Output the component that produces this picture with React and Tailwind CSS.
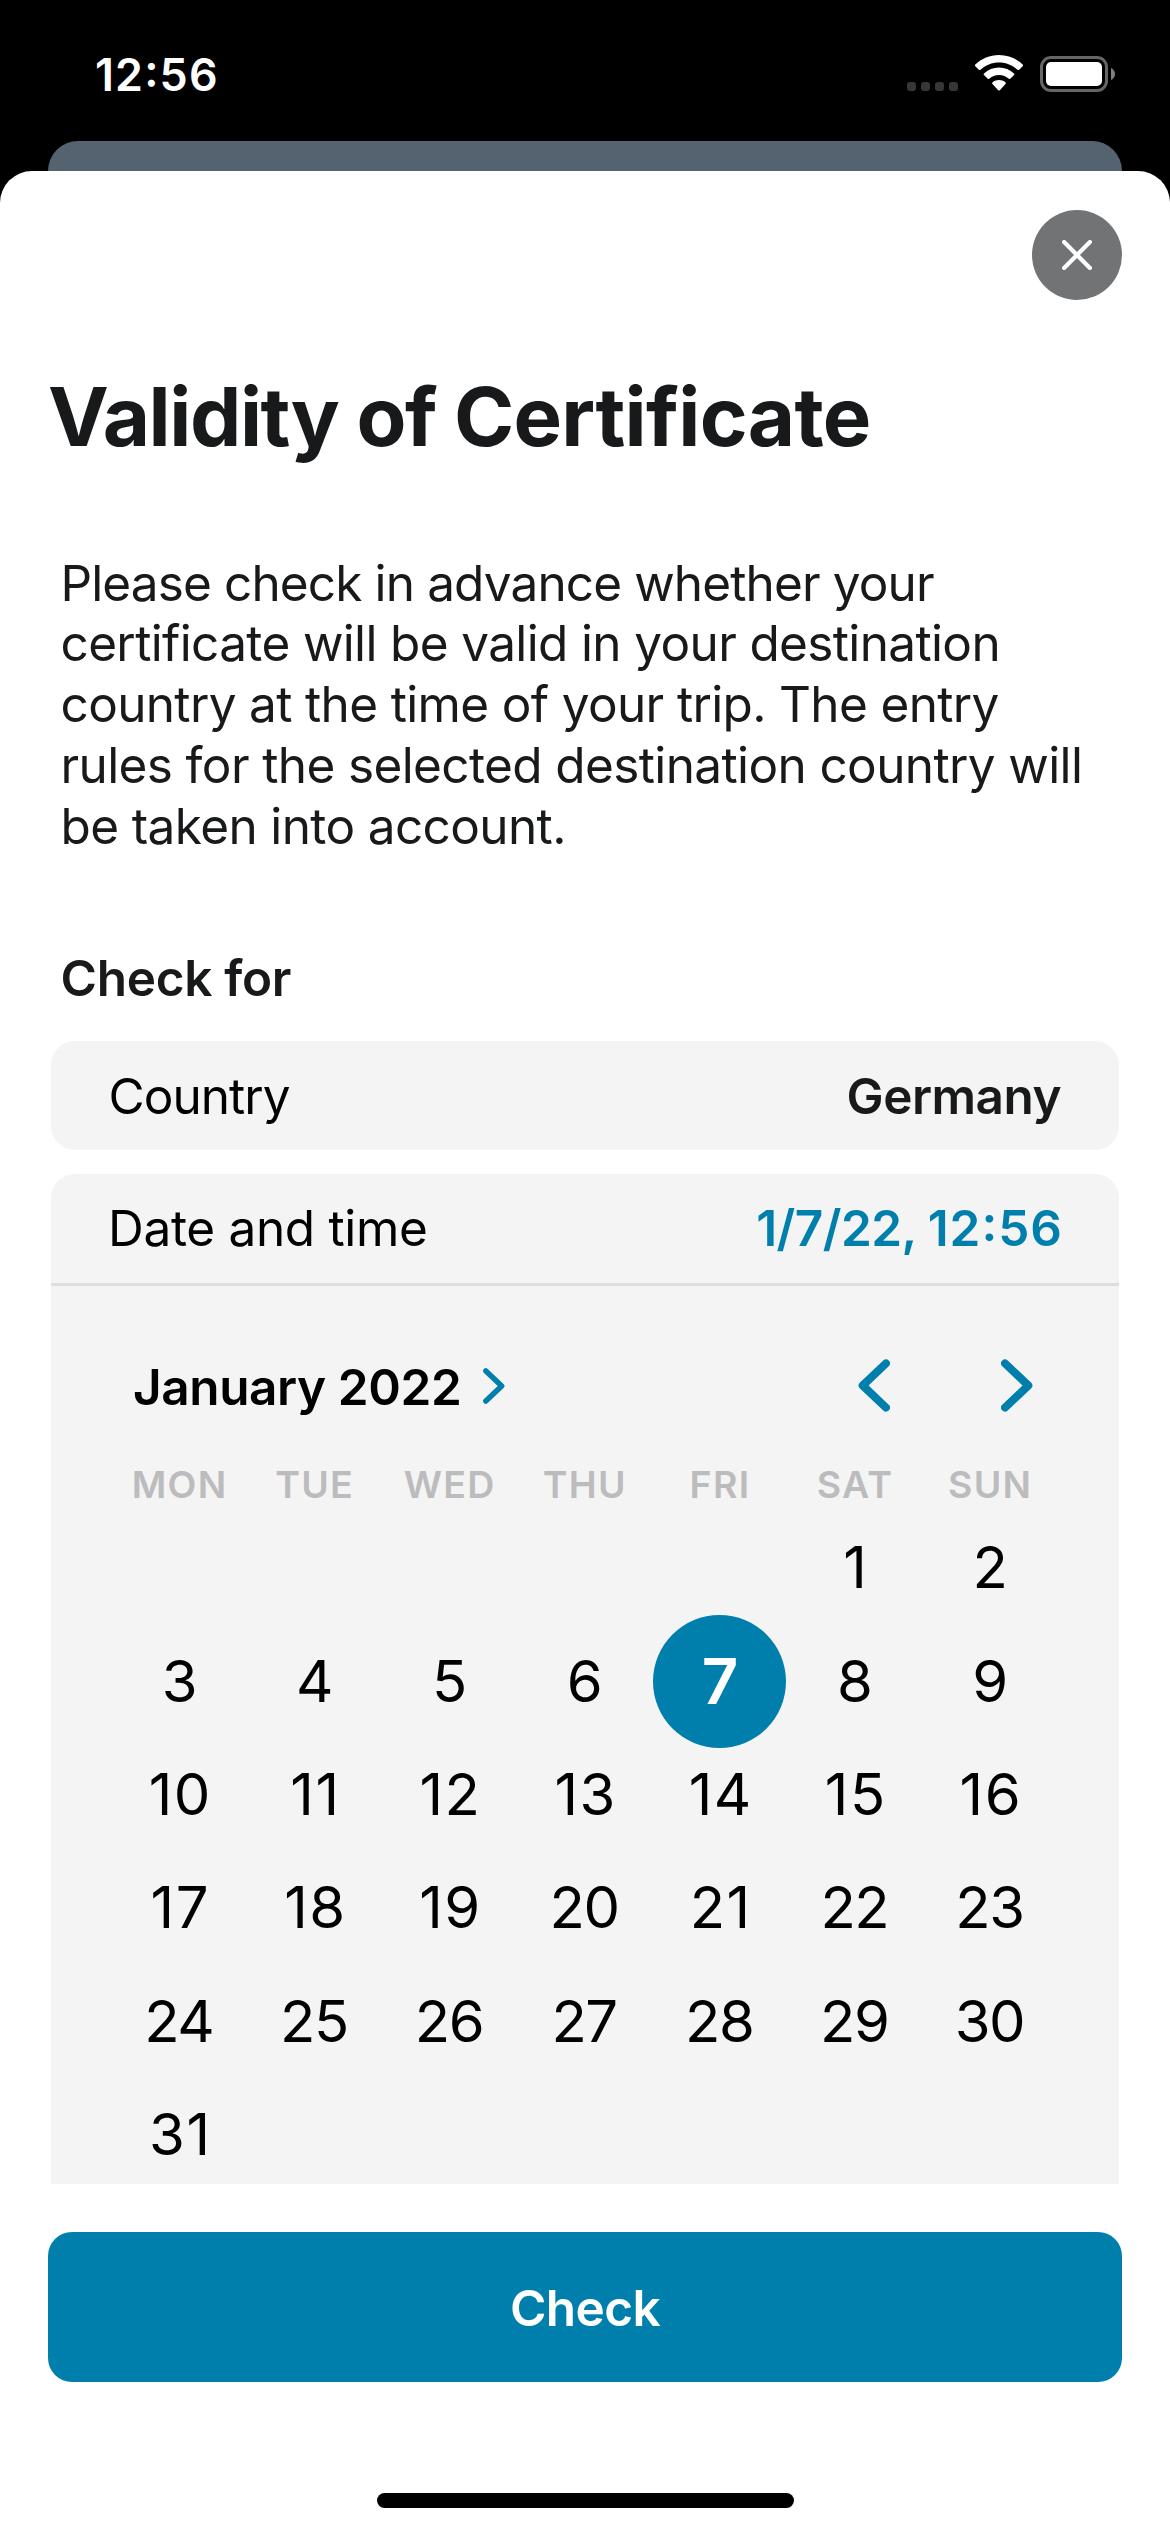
import React from "react";

const paragraph = [
  ["Please check in advance whether your", "tracking-[-0.87px]"],
  ["certificate will be valid in your destination", "tracking-[-0.64px]"],
  ["country at the time of your trip. The entry", "tracking-[-0.65px]"],
  ["rules for the selected destination country will", "tracking-[-0.62px]"],
  ["be taken into account.", "tracking-[-0.62px]"],
];

const weekdays = ["MON", "TUE", "WED", "THU", "FRI", "SAT", "SUN"];
const cells = [...Array(5).fill(null), ...Array.from({ length: 31 }, (_, i) => i + 1)];
const selectedDay = 7;

function dayTracking(day) {
  return day >= 20 && day % 10 !== 1 ? "indent-[-1.5px] tracking-[-1.5px]" : "indent-[1.5px] tracking-[1.5px]";
}

function Chevron({ direction = "right", className }) {
  return (
    <svg
      viewBox="0 0 32 53"
      className={className}
      fill="none"
      stroke="currentColor"
      strokeWidth="8"
      strokeLinecap="round"
      strokeLinejoin="round"
    >
      <path d={direction === "right" ? "M4 4.4L27.3 26.5L4 48.6" : "M28 4.4L4.7 26.5L28 48.6"} />
    </svg>
  );
}

function StatusBar() {
  return (
    <header className="flex h-[141px] items-start text-white">
      <span className="ml-[95px] mt-[45px] text-[44.8px] font-semibold leading-[60px] tracking-[1.15px] [font-feature-settings:'calt']">
        12:56
      </span>
      <div className="ml-auto mr-[55px] mt-[55px] flex items-start">
        <div className="mt-[27px] flex gap-[5px]">
          {[0, 1, 2, 3].map((i) => (
            <span key={i} className="size-[9px] rounded-[3px] bg-[#363838]" />
          ))}
        </div>
        <svg viewBox="0 0 48 36" className="ml-[17px] h-9 w-12" fill="#fff">
          <path d="M24 0C33.2 0 41.500 3.600 47.700 9.500C48.200 10 48.200 10.700 47.700 11.200L44.200 14.700C43.700 15.200 43 15.200 42.500 14.700C37.600 10.100 31.100 7.400 24 7.400S10.400 10.100 5.500 14.700C5 15.200 4.300 15.200 3.800 14.700L0.300 11.200C-0.200 10.700-0.200 10 0.300 9.500C6.500 3.600 14.800 0 24 0Z" />
          <path d="M24 12.600C29.800 12.600 35 14.800 39 18.400C39.500 18.900 39.500 19.600 39 20.100L35.500 23.600C35 24.100 34.400 24.100 33.900 23.700C31.200 21.400 27.800 20 24 20S16.800 21.400 14.100 23.700C13.600 24.100 13 24.100 12.500 23.600L9 20.100C8.500 19.600 8.500 18.900 9 18.400C13 14.800 18.200 12.600 24 12.600Z" />
          <path d="M24 25C26.400 25 28.600 25.800 30.400 27.200C31 27.700 31 28.400 30.500 28.900L24.800 35.200C24.300 35.700 23.700 35.700 23.200 35.200L17.500 28.900C17 28.400 17 27.700 17.600 27.200C19.400 25.800 21.600 25 24 25Z" />
        </svg>
        <div className="ml-[17px] mt-px flex items-center">
          <div className="h-9 w-[68px] rounded-[11px] border-[3px] border-[#666] p-[3px]">
            <div className="h-full w-full rounded-[5px] bg-white" />
          </div>
          <svg viewBox="0 0 4 12" className="ml-[3px] h-3 w-1">
            <path d="M0 0C2.400 1 4 3.400 4 6S2.400 11 0 12Z" fill="#808080" />
          </svg>
        </div>
      </div>
    </header>
  );
}

export default function App() {
  return (
    <div className="flex h-[2532px] w-[1170px] flex-col overflow-hidden bg-black font-['Inter',sans-serif] text-[49.5px] text-black">
      <StatusBar />
      <div className="mx-12 h-[30px] shrink-0 rounded-t-[30px] bg-[#55626f]" />

      <main className="flex flex-1 flex-col rounded-t-[32px] bg-white">
        <button className="mr-12 mt-[39px] flex size-[90px] shrink-0 items-center justify-center self-end rounded-full bg-[#727375]">
          <svg viewBox="0 0 30 30" className="size-[30px]" stroke="#fff" strokeWidth="4.2" strokeLinecap="round">
            <path d="M2.100 2.100L27.900 27.900M27.900 2.100L2.100 27.900" />
          </svg>
        </button>

        <h1 className="ml-12 mt-[67px] text-[81.5px] font-bold leading-[100px] tracking-[-0.7px] text-[#18191a]">
          <span className="tracking-[-1.4px]">Validity of </span>Certificate
        </h1>

        <p className="ml-[60.5px] mt-[85.6px] leading-[60.75px] text-[#18191a]">
          {paragraph.map(([line, tracking]) => (
            <span key={line} className={`block whitespace-nowrap ${tracking}`}>
              {line}
            </span>
          ))}
        </p>

        <h2 className="ml-[60.5px] mt-[91.6px] font-semibold leading-[60px] tracking-[-0.3px] text-[#18191a]">
          Check for
        </h2>

        <section className="mx-[51px] mt-[33px] flex h-[109px] shrink-0 items-center justify-between rounded-3xl bg-[#f4f4f4] pl-[57.5px] pr-[58px] pt-px">
          <span className="tracking-[-0.96px]">Country</span>
          <span className="font-semibold tracking-[-0.52px] text-[#18191a]">Germany</span>
        </section>

        <section className="mx-[51px] mt-6 flex h-[1010px] shrink-0 flex-col overflow-hidden rounded-t-3xl bg-[#f4f4f4]">
          <div className="box-content flex h-[109px] shrink-0 items-center justify-between border-b-[3px] border-[#dedede] pl-[57px] pr-[56px]">
            <span className="tracking-[-0.32px]">Date and time</span>
            <span className="font-semibold tracking-[1px] text-[#007fad] [font-feature-settings:'calt']">
              <span className="tracking-[-0.55px]">1/7/22, </span>12:56
            </span>
          </div>

          <div className="mt-[71px] flex h-[60px] shrink-0 items-center pl-[82px] pr-[86px] text-[#007fad]">
            <span className="font-semibold leading-[60px] tracking-[-0.41px] text-black">January 2022</span>
            <Chevron className="ml-[22px] mt-[-2px] h-9 w-[22px]" />
            <Chevron direction="left" className="ml-auto mt-[-3px] h-[53px] w-8" />
            <Chevron className="ml-[111px] mt-[-3px] h-[53px] w-8" />
          </div>

          <div className="ml-[61px] mt-[43px] grid w-[945.7px] shrink-0 grid-cols-7 text-center text-[37.5px] font-semibold leading-[50px] tracking-[1.3px] text-[#bcbcbe]">
            {weekdays.map((day) => (
              <span key={day}>{day}</span>
            ))}
          </div>

          <div className="ml-[61px] mt-px grid w-[945.7px] shrink-0 auto-rows-[113.45px] grid-cols-7 text-[58px]">
            {cells.map((day, i) => (
              <div key={i} className="flex items-center justify-center">
                {day === selectedDay ? (
                  <span className="flex size-[133px] shrink-0 items-center justify-center rounded-full bg-[#007fad] text-[63.5px] font-semibold text-white">
                    {day}
                  </span>
                ) : (
                  <span className={dayTracking(day)}>{day}</span>
                )}
              </div>
            ))}
          </div>
        </section>

        <button className="mx-12 mt-12 h-[150px] shrink-0 rounded-3xl bg-[#007fad] pt-0.5 font-semibold tracking-[-0.62px] text-white">
          Check
        </button>

        <div className="mt-[111px] h-[15px] w-[417px] self-center rounded-full bg-black" />
      </main>
    </div>
  );
}
